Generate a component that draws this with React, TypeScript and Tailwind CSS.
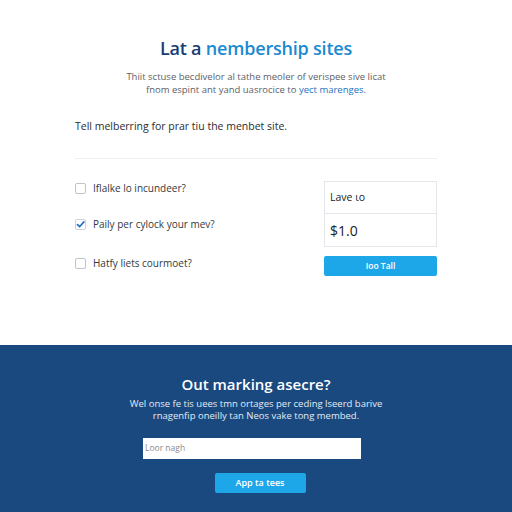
import React from "react";

function Check({ checked }: { checked?: boolean }) {
  return (
    <span
      className={`flex h-[11px] w-[11px] items-center justify-center rounded-[2px] border ${
        checked ? "border-[#c9d3de] bg-white" : "border-[#bfc4ca] bg-white"
      }`}
    >
      {checked && (
        <svg viewBox="0 0 12 12" className="h-[11px] w-[11px]">
          <path d="M2 6.2 L4.8 9 L10.5 2.5" fill="none" stroke="#1a73c9" strokeWidth="2.2" strokeLinecap="round" strokeLinejoin="round" />
        </svg>
      )}
    </span>
  );
}

export default function App() {
  const options = [
    { label: "Iflalke lo incundeer?", checked: false },
    { label: "Paily per cylock your mev?", checked: true },
    { label: "Hatfy liets courmoet?", checked: false },
  ];
  return (
    <div className="flex h-[512px] w-[512px] flex-col bg-white" style={{ fontFamily: "'Open Sans', 'Noto Sans', sans-serif" }}>
      <div className="h-[345px] px-[75px] pt-[36px]">
        <h1 className="text-center text-[18px] font-semibold leading-[24px] tracking-[-0.2px]">
          <span className="text-[#163e73]">Lat a </span>
          <span className="text-[#1a8ad0]">nembership sites</span>
        </h1>
        <p className="mt-[10px] text-center text-[9.5px] leading-[13px] text-[#5d6166]">
          Thiit sctuse becdivelor al tathe meoler of verispee sive licat
          <br />
          fnom espint ant yand uasrocice to <span className="text-[#1a73c0]">yect marenges.</span>
        </p>
        <p className="mt-[23px] text-[10.5px] leading-[14px] text-[#2a2d31]">Tell melberring for prar tiu the menbet site.</p>
        <div className="mt-[25px] h-px bg-[#eceef0]" />
        <div className="mt-[22px] flex justify-between">
          <div className="flex flex-col">
            {options.map((o, i) => (
              <div key={i} className={`flex items-center gap-[7px] ${i === 0 ? "" : i === 1 ? "mt-[22px]" : "mt-[25px]"}`}>
                <Check checked={o.checked} />
                <span className="text-[10px] leading-[14px] text-[#34383d]">{o.label}</span>
              </div>
            ))}
          </div>
          <div className="flex w-[113px] flex-col">
            <div className="flex flex-col border border-[#e3e6ea]">
              <div className="flex h-[32px] items-center border-b border-[#e3e6ea] px-[5px] text-[10.5px] text-[#222]">Lave ιo</div>
              <div className="flex h-[32px] items-center px-[5px] text-[14px] text-[#222]">$1.0</div>
            </div>
            <button className="mt-[9px] flex h-[20px] items-center justify-center rounded-[2px] bg-[#1ea7e8] text-[8.5px] font-semibold text-white">
              Ioo Tall
            </button>
          </div>
        </div>
      </div>
      <div className="flex flex-1 flex-col items-center bg-[#19497f] pt-[29px]">
        <h2 className="text-[15px] font-semibold leading-[20px] text-white">Out marking asecre?</h2>
        <p className="mt-[4px] text-center text-[9.5px] leading-[12px] text-[#e3ebf5]">
          Wel onse fe tis uees tmn ortages per ceding lseerd barive
          <br />
          rnagenfip oneilly tan Neos vake tong membed.
        </p>
        <div className="mr-[8px] mt-[16px] flex h-[21px] w-[218px] items-center bg-white px-[2px] text-[8.5px] text-[#8a8d91]">Loor nagh</div>
        <button className="ml-[8px] mt-[14px] flex h-[20px] w-[91px] items-center justify-center rounded-[2px] bg-[#1ea7e8] text-[9px] font-semibold text-white">
          App ta tees
        </button>
      </div>
    </div>
  );
}
